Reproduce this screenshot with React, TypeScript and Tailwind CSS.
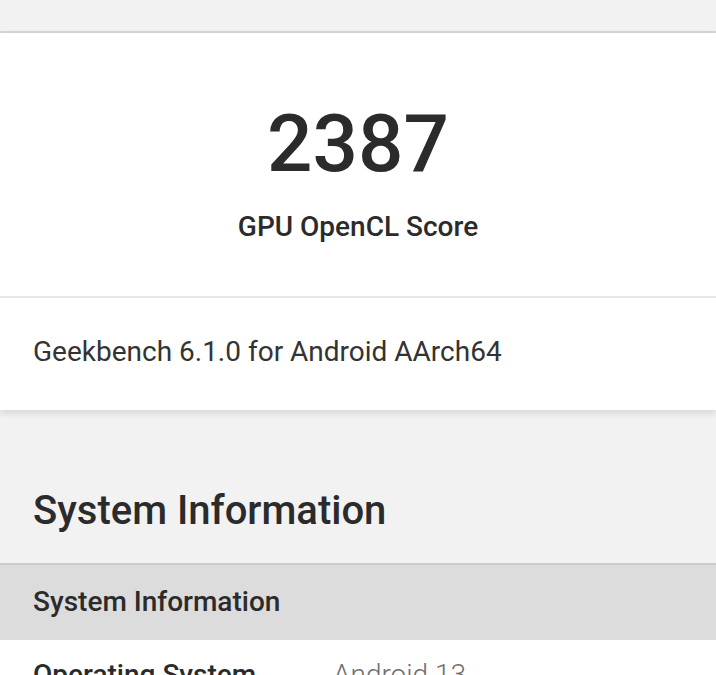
export default function App() {
  return (
    <div
      className="w-[716px] h-[675px] overflow-hidden bg-[#f2f2f2] text-[#2a2a2a]"
      style={{ fontFamily: "Roboto, 'Noto Sans', sans-serif" }}
    >
      <div className="h-[31px] bg-[#f2f2f2]" />
      <div className="h-[2px] bg-[#d6d6d6]" />
      <div className="relative z-10 bg-white shadow-[0_3px_7px_rgba(0,0,0,0.12)]">
        <div className="h-[263px] flex flex-col items-center">
          <div className="mt-[71px] text-[80px] leading-[80px] font-medium text-[#2b2b2b]">2387</div>
          <div className="mt-[29px] text-[28px] leading-[28px] font-medium text-[#2b2b2b]">GPU OpenCL Score</div>
        </div>
        <div className="h-[2px] bg-[#e6e6e6]" />
        <div className="h-[112px] px-[33px] pt-[40px] text-[28px] leading-[28px] text-[#333]">
          Geekbench 6.1.0 for Android AArch64
        </div>
      </div>
      <div className="h-[153px] px-[33px] pt-[81px]">
        <div className="text-[40px] leading-[40px] font-medium text-[#2b2b2b]">System Information</div>
      </div>
      <div className="h-[2px] bg-[#cdcdcd]" />
      <div className="h-[75px] bg-[#dcdcdc] px-[33px] pt-[23px]">
        <div className="text-[28px] leading-[28px] font-medium text-[#2b2b2b]">System Information</div>
      </div>
      <div className="bg-white h-[200px] flex px-[33px] pt-[21px] text-[28px] leading-[28px]">
        <div className="w-[300px] font-medium text-[#2b2b2b]">Operating System</div>
        <div className="font-light text-[#6f6f6f]">Android 13</div>
      </div>
    </div>
  );
}
